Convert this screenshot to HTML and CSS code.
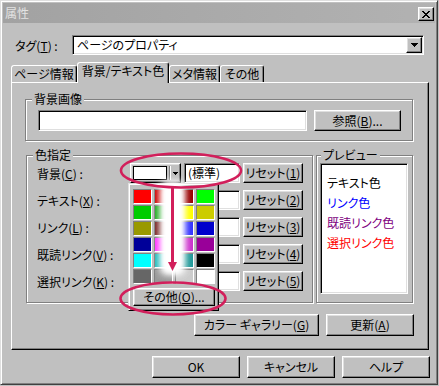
FILE: index.html
```html
<!DOCTYPE html>
<html lang="ja">
<head>
<meta charset="utf-8">
<title>属性</title>
<link rel="stylesheet" href="styles.css">
</head>
<body>
<div class="window">
  <div class="titlebar">
    <span class="title">属性</span>
    <span class="close-btn raised"><svg width="8" height="7" viewBox="0 0 8 7"><path d="M0 0H2V1H3V2H5V1H6V0H8V1H7V2H6V3H5V4H6V5H7V6H8V7H6V6H5V5H3V6H2V7H0V6H1V5H2V4H3V3H2V2H1V1H0Z" fill="#000"/></svg></span>
  </div>
  <div class="client">
    <div class="tag-row">
      <span class="tag-label">タグ(<u>T</u>) :</span>
      <div class="combo sunken">
        <span class="combo-text">ページのプロパティ</span>
        <span class="drop-btn raised"><svg width="7" height="4" viewBox="0 0 7 4"><path d="M0 0H7V1H6V2H5V3H4V4H3V3H2V2H1V1H0Z" fill="#000"/></svg></span>
      </div>
    </div>
    <div class="tabs">
      <span class="tab tab-page">ページ情報</span>
      <span class="tab tab-color active">背景/テキスト色</span>
      <span class="tab tab-meta">メタ情報</span>
      <span class="tab tab-other">その他</span>
    </div>
    <div class="panel">
      <div class="group group-image">
        <span class="legend">背景画像</span>
        <div class="image-row">
          <span class="textbox sunken textbox-wide"></span>
          <span class="btn raised btn-browse">参照(<u>B</u>)...</span>
        </div>
      </div>
      <div class="color-area">
        <div class="group group-colors">
          <span class="legend">色指定</span>
          <div class="color-rows">
            <div class="color-row">
              <span class="row-label">背景(<u>C</u>) :</span>
              <span class="color-combo raised"><span class="swatch-main"></span><span class="sep"></span><svg class="mini-arrow" width="5" height="3" viewBox="0 0 5 3"><path d="M0 0H5V1H4V2H3V3H2V2H1V1H0Z" fill="#000"/></svg></span>
              <span class="std-box sunken">(標準)</span>
              <span class="btn raised btn-reset">リセット(<u>1</u>)</span>
            </div>
            <div class="color-row">
              <span class="row-label">テキスト(<u>X</u>) :</span>
              <span class="color-combo raised"><span class="swatch-main"></span><span class="sep"></span><svg class="mini-arrow" width="5" height="3" viewBox="0 0 5 3"><path d="M0 0H5V1H4V2H3V3H2V2H1V1H0Z" fill="#000"/></svg></span>
              <span class="std-box sunken"></span>
              <span class="btn raised btn-reset">リセット(<u>2</u>)</span>
            </div>
            <div class="color-row">
              <span class="row-label">リンク(<u>L</u>) :</span>
              <span class="color-combo raised"><span class="swatch-main"></span><span class="sep"></span><svg class="mini-arrow" width="5" height="3" viewBox="0 0 5 3"><path d="M0 0H5V1H4V2H3V3H2V2H1V1H0Z" fill="#000"/></svg></span>
              <span class="std-box sunken"></span>
              <span class="btn raised btn-reset">リセット(<u>3</u>)</span>
            </div>
            <div class="color-row">
              <span class="row-label">既読リンク(<u>V</u>) :</span>
              <span class="color-combo raised"><span class="swatch-main"></span><span class="sep"></span><svg class="mini-arrow" width="5" height="3" viewBox="0 0 5 3"><path d="M0 0H5V1H4V2H3V3H2V2H1V1H0Z" fill="#000"/></svg></span>
              <span class="std-box sunken"></span>
              <span class="btn raised btn-reset">リセット(<u>4</u>)</span>
            </div>
            <div class="color-row">
              <span class="row-label">選択リンク(<u>K</u>) :</span>
              <span class="color-combo raised"><span class="swatch-main"></span><span class="sep"></span><svg class="mini-arrow" width="5" height="3" viewBox="0 0 5 3"><path d="M0 0H5V1H4V2H3V3H2V2H1V1H0Z" fill="#000"/></svg></span>
              <span class="std-box sunken"></span>
              <span class="btn raised btn-reset">リセット(<u>5</u>)</span>
            </div>
          </div>
        </div>
        <div class="group group-preview">
          <span class="legend legend-preview">プレビュー</span>
          <div class="preview-box sunken">
            <div class="pv-text">テキスト色</div>
            <div class="pv-link">リンク色</div>
            <div class="pv-visited">既読リンク色</div>
            <div class="pv-active">選択リンク色</div>
          </div>
        </div>
      </div>
      <div class="panel-buttons">
        <span class="btn raised btn-gallery">カラー ギャラリー(<u>G</u>)</span>
        <span class="btn raised btn-update">更新(<u>A</u>)</span>
      </div>
    </div>
    <div class="dialog-buttons">
      <span class="btn raised btn-dialog">OK</span>
      <span class="btn raised btn-dialog">キャンセル</span>
      <span class="btn raised btn-dialog">ヘルプ</span>
    </div>
  </div>

  <div class="palette">
    <div class="palette-grid">
      <span class="cell" style="background:#ff0000"></span>
      <span class="cell" style="background:#cc0000"></span>
      <span class="cell" style="background:#990000"></span>
      <span class="cell" style="background:#00ff00"></span>
      <span class="cell" style="background:#00cc00"></span>
      <span class="cell" style="background:#22aa22"></span>
      <span class="cell" style="background:#ffff00"></span>
      <span class="cell" style="background:#cccc00"></span>
      <span class="cell" style="background:#999900"></span>
      <span class="cell" style="background:#772222"></span>
      <span class="cell" style="background:#3333ff"></span>
      <span class="cell" style="background:#0000cc"></span>
      <span class="cell" style="background:#000099"></span>
      <span class="cell" style="background:#ff33ff"></span>
      <span class="cell" style="background:#cc33cc"></span>
      <span class="cell" style="background:#990099"></span>
      <span class="cell" style="background:#00ffff"></span>
      <span class="cell" style="background:#22bbbb"></span>
      <span class="cell" style="background:#229999"></span>
      <span class="cell" style="background:#000000"></span>
      <span class="cell" style="background:#666666"></span>
      <span class="cell" style="background:#999999"></span>
      <span class="cell" style="background:#cccccc"></span>
      <span class="cell" style="background:#ffffff"></span>
    </div>
    <span class="btn raised btn-more">その他(<u>O</u>)...</span>
  </div>

  <svg class="annotations" width="438" height="385" viewBox="0 0 438 385">
    <defs>
      <filter id="glow" x="-4" y="-1" width="9" height="3">
        <feGaussianBlur stdDeviation="4.5"/>
      </filter>
      <filter id="glow2" x="-4" y="-1" width="9" height="3">
        <feGaussianBlur stdDeviation="2.5"/>
      </filter>
    </defs>
    <rect x="163" y="184" width="19" height="88" fill="#fff" filter="url(#glow)"/>
    <rect x="163" y="184" width="19" height="88" fill="#fff" filter="url(#glow)"/>
    <rect x="163" y="184" width="19" height="88" fill="#fff" filter="url(#glow)"/>
    <rect x="166" y="186" width="13" height="84" fill="#fff" filter="url(#glow2)"/>
    <rect x="166" y="186" width="13" height="84" fill="#fff" filter="url(#glow2)"/>
    <ellipse cx="181" cy="170.5" rx="60" ry="17" fill="none" stroke="#d21f5b" stroke-width="2.6"/>
    <ellipse cx="173" cy="298.5" rx="52.5" ry="16" fill="none" stroke="#d21f5b" stroke-width="2.6"/>
    <rect x="171" y="188" width="3" height="75" fill="#d21f5b"/>
    <polygon points="168,262 177,262 172.5,271" fill="#d21f5b"/>
  </svg>
</div>
</body>
</html>
```
FILE: styles.css
```css
* { box-sizing: border-box; }

html, body {
  margin: 0;
  padding: 0;
}

body {
  width: 439px;
  height: 386px;
  overflow: hidden;
  background: #c0c0c0;
  font-family: "Noto Sans CJK JP", "Noto Sans", sans-serif;
  font-size: 12px;
  font-feature-settings: "palt" 1;
  color: #000;
}

u { text-underline-offset: 1px; }

.raised {
  background: #c0c0c0;
  border: 1px solid;
  border-color: #fff #000 #000 #fff;
  box-shadow: inset -1px -1px 0 #808080, inset 1px 1px 0 #dfdfdf;
}

.sunken {
  background: #fff;
  border: 1px solid;
  border-color: #808080 #fff #fff #808080;
  box-shadow: inset 1px 1px 0 #000, inset -1px -1px 0 #dfdfdf;
}

.window {
  position: relative;
  width: 438px;
  height: 385px;
  border: 1px solid;
  border-color: #dfdfdf #404040 #404040 #dfdfdf;
  box-shadow: inset 1px 1px 0 #fff, inset -1px -1px 0 #808080;
  padding: 2px;
  background: #c0c0c0;
  display: flex;
  flex-direction: column;
}

.titlebar {
  height: 20px;
  flex: none;
  background: linear-gradient(90deg, #a2a2a2, #b2b2b2);
  display: flex;
  align-items: flex-start;
  justify-content: space-between;
}

.title {
  color: #e2e2e2;
  line-height: 20px;
  padding-left: 2px;
}

.close-btn {
  width: 16px;
  height: 14px;
  margin: 4px 1px 0 0;
  display: flex;
  align-items: center;
  justify-content: center;
}

.client {
  flex: 1;
  display: flex;
  flex-direction: column;
  padding: 12px 5px 0 8px;
}

.tag-row {
  display: flex;
  align-items: center;
  height: 20px;
}

.tag-label {
  width: 57px;
  margin-left: 4px;
}

.combo {
  width: 352px;
  height: 20px;
  padding: 1px;
  display: flex;
  align-items: center;
}

.combo-text {
  flex: 1;
  padding-left: 3px;
  line-height: 16px;
}

.drop-btn {
  width: 16px;
  height: 16px;
  display: flex;
  align-items: center;
  justify-content: center;
}

.tabs {
  display: flex;
  align-items: flex-end;
  height: 20px;
  margin-top: 7px;
  flex: none;
}

.tab {
  height: 17px;
  border: 1px solid;
  border-bottom: none;
  border-color: #fff #000 transparent #fff;
  box-shadow: inset -1px 0 0 #808080;
  border-radius: 3px 3px 0 0;
  background: #c0c0c0;
  text-align: center;
  line-height: 16px;
  white-space: nowrap;
}

.tab.active {
  height: 21px;
  margin-bottom: -1px;
  position: relative;
  z-index: 1;
}

.tab-page { width: 66px; }
.tab-color { width: 92px; }
.tab-meta { width: 51px; }
.tab-other { width: 44px; }

.panel {
  width: 418px;
  height: 268px;
  flex: none;
  border: 1px solid;
  border-color: #fff #000 #000 #fff;
  box-shadow: inset -1px -1px 0 #808080;
  display: flex;
  flex-direction: column;
}

.group {
  border: 1px solid #808080;
  box-shadow: inset 1px 1px 0 #fff, 1px 1px 0 #fff;
  display: flex;
  flex-direction: column;
}

.legend {
  align-self: flex-start;
  line-height: 14px;
  margin: -8px 0 -6px 6px;
  padding: 0 2px;
  background: #c0c0c0;
}

.legend-preview { margin-left: 4px; }

.group-image {
  margin: 16px 0 0 13px;
  width: 388px;
  height: 42px;
}

.image-row {
  display: flex;
  gap: 7px;
  margin: 10px 0 0 12px;
}

.textbox-wide {
  width: 269px;
  height: 21px;
}

.btn {
  display: flex;
  align-items: center;
  justify-content: center;
  white-space: nowrap;
  line-height: 14px;
}

.btn-browse {
  width: 87px;
  height: 21px;
}

.color-area {
  display: flex;
  margin: 14px 0 0 14px;
}

.group-colors {
  width: 287px;
  height: 148px;
}

.group-preview {
  width: 97px;
  height: 148px;
  margin-left: 3px;
}

.color-rows {
  display: flex;
  flex-direction: column;
  gap: 7px;
  margin: 7px 0 0 10px;
}

.color-row {
  display: flex;
  align-items: center;
  height: 20px;
}

.row-label {
  width: 93px;
  white-space: nowrap;
}

.color-combo {
  width: 51px;
  height: 20px;
  display: flex;
  align-items: center;
  padding-left: 2px;
}

.swatch-main {
  width: 34px;
  height: 14px;
  background: #fff;
  border: 1px solid #000;
}

.sep {
  width: 2px;
  height: 14px;
  margin-left: 2px;
  border-left: 1px solid #808080;
  border-right: 1px solid #fff;
}

.mini-arrow {
  margin-left: 2px;
}

.std-box {
  width: 56px;
  height: 20px;
  margin-left: 3px;
  padding-left: 3px;
  line-height: 18px;
}

.btn-reset {
  width: 60px;
  height: 20px;
  margin-left: 3px;
}

.preview-box {
  margin: 7px 0 0 3px;
  width: 88px;
  height: 131px;
  padding: 9px 0 0 6px;
  line-height: 20px;
}

.pv-text { color: #000; }
.pv-link { color: #0000ff; }
.pv-visited { color: #800080; }
.pv-active { color: #ff0000; }

.panel-buttons {
  display: flex;
  gap: 7px;
  margin: 11px 0 0 182px;
}

.btn-gallery {
  width: 125px;
  height: 22px;
}

.btn-update {
  width: 88px;
  height: 22px;
}

.dialog-buttons {
  display: flex;
  justify-content: flex-end;
  gap: 7px;
  margin-top: 6px;
}

.btn-dialog {
  width: 88px;
  height: 22px;
}

.palette {
  position: absolute;
  left: 127px;
  top: 182px;
  width: 91px;
  height: 128px;
  padding: 5px 0 0 4px;
  background: #c0c0c0;
  border: 1px solid;
  border-color: #dfdfdf #000 #000 #dfdfdf;
  box-shadow: inset 1px 1px 0 #fff, inset -1px -1px 0 #808080;
  display: flex;
  flex-direction: column;
  z-index: 2;
}

.palette-grid {
  display: grid;
  grid-template-columns: repeat(4, 19px);
  grid-auto-rows: 15px;
  column-gap: 2px;
  row-gap: 1px;
}

.cell {
  border: 1px solid;
  border-color: #808080 #fff #fff #808080;
}

.btn-more {
  width: 82px;
  height: 18px;
  margin-top: 4px;
}

.annotations {
  position: absolute;
  left: -1px;
  top: -1px;
  z-index: 3;
  pointer-events: none;
}
```
